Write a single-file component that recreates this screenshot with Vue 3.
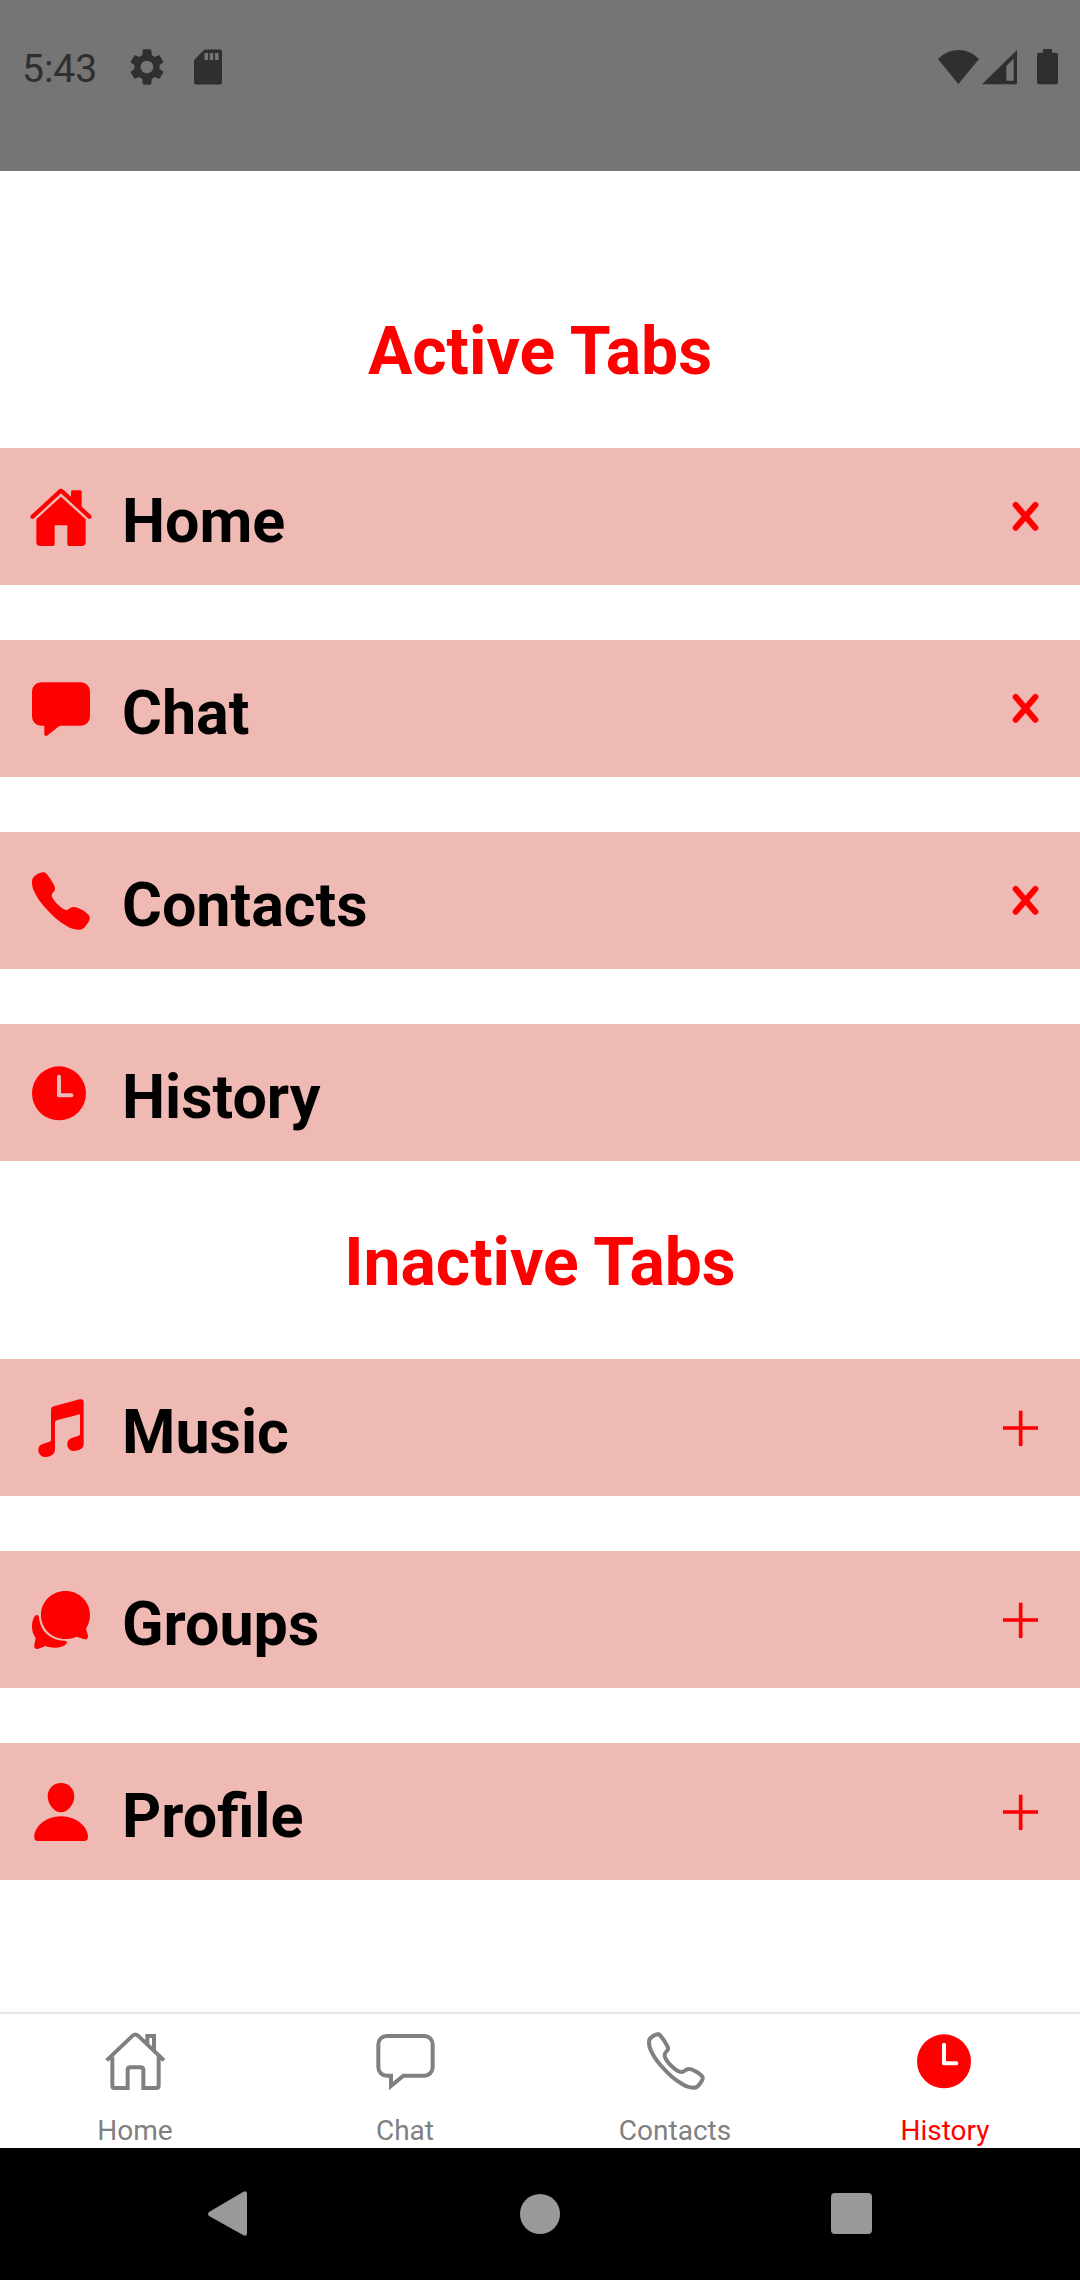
<script setup>
import { ref } from 'vue'

const phone =
  'M9 38C9 22 30 10 43 10C47 10 50 12 53 15C62 26 70 38 75 48C79 56 79 62 76 66C73 71 68 73 68 80C70 87 78 99 88 108C96 116 107 124 113 123C120 122 124 114 133 114C139 113 152 118 160 123C167 127 174 133 179 138C183 144 183 150 181 154C178 160 173 168 168 173C163 181 155 182 148 182C135 182 122 177 113 171C90 158 70 141 53 121C37 103 23 85 16 68C10 56 9 47 9 38Z'

const icons = {
  home: 'M6 91L88 15Q96 8 104 15L126 35V20Q126 16 130 16H154Q158 16 158 20V65L186 91Q190 96 186 100Q181 104 177 100L96 25L15 100Q11 104 6 100Q2 96 6 91ZM96 35L170 103V171Q170 183 158 183H120Q115 183 115 178V121H77V178Q77 183 72 183H34Q22 183 22 171V103Z',
  chat: 'M36 16H156A27 27 0 0 1 183 43V119A27 27 0 0 1 156 146H94Q91 147 88 149L56 175Q46 180 46 172V146H36A27 27 0 0 1 9 119V43A27 27 0 0 1 36 16Z',
  contacts: phone,
  history: 'M90 16A81 81 0 1 1 90 178A81 81 0 1 1 90 16ZM84 47V104Q84 109 90 109H127A6 6 0 0 0 127 97H96V47A6 6 0 0 0 84 47Z',
  music: 'M66 42C66 35 70 31 77 30L152 10C160 8 164 12 164 19V145C164 159 147 165 135 165C122 165 114 154 115 143C115 134 121 128 128 126L149 119Q153 118 153 114V55L83 73Q78 75 78 80V160C78 176 63 183 50 183C37 183 28 174 28 161C28 152 34 146 41 144L62 137Q66 135 66 131Z',
  groups: 'M110 9C151 9 183 41 183 81C183 98 178 111 171 122L177 143C178 151 172 156 166 154L143 146C133 151 122 153 110 153C68 153 36 122 36 81C36 41 68 9 110 9ZM24 81C28 81 29 84 30 89C33 112 42 129 58 142C72 153 88 159 108 158C114 159 115 164 112 168C104 176 90 179 78 179C67 179 58 177 50 174L26 183C19 184 14 179 16 172L20 150C13 140 9 129 9 116C9 102 14 81 24 81Z',
  profile: 'M96 9C120 9 136 28 136 49C136 73 117 97 96 97C75 97 56 73 56 49C56 28 72 9 96 9ZM96 109C146 109 177 144 177 170Q177 183 165 183H27Q15 183 16 170C16 144 46 109 96 109Z'
}

const current = ref('history')
const active = ref([
  { id: 'home', label: 'Home' },
  { id: 'chat', label: 'Chat' },
  { id: 'contacts', label: 'Contacts' },
  { id: 'history', label: 'History' }
])
const inactive = ref([
  { id: 'music', label: 'Music' },
  { id: 'groups', label: 'Groups' },
  { id: 'profile', label: 'Profile' }
])

function deactivate(tab) {
  active.value = active.value.filter((t) => t.id !== tab.id)
  inactive.value.push(tab)
}
function activate(tab) {
  inactive.value = inactive.value.filter((t) => t.id !== tab.id)
  active.value.push(tab)
}
</script>

<template>
  <div class="screen">
    <header class="status">
      <div class="status-group start">
        <time class="clock">5:43</time>
        <svg class="glyph" viewBox="0 0 24 24" aria-hidden="true">
          <path d="M19.14 12.94c.04-.3.06-.61.06-.94 0-.32-.02-.64-.07-.94l2.03-1.58c.18-.14.23-.41.12-.61l-1.92-3.32c-.12-.22-.37-.29-.59-.22l-2.39.96c-.5-.38-1.03-.7-1.62-.94L14.4 2.300c-.04-.24-.24-.41-.48-.41h-3.840c-.24 0-.43.17-.47.41l-.36 3.050c-.59.24-1.13.57-1.62.94l-2.390-.96c-.22-.08-.47 0-.59.22L2.740 8.870c-.12.21-.08.47.12.61l2.030 1.580c-.05.3-.09.63-.09.94s.02.64.07.94l-2.030 1.580c-.18.14-.23.41-.12.61l1.920 3.320c.12.22.37.29.59.22l2.390-.96c.5.38 1.030.7 1.620.94l.36 3.050c.05.24.24.41.48.41h3.840c.24 0 .44-.17.47-.41l.36-3.050c.59-.24 1.130-.56 1.620-.94l2.390.96c.22.08.47 0 .59-.22l1.920-3.320c.12-.22.07-.47-.12-.61l-2.010-1.580zM12 15.600c-1.980 0-3.600-1.620-3.600-3.600s1.620-3.600 3.600-3.600 3.600 1.620 3.600 3.600-1.620 3.600-3.600 3.600z" />
        </svg>
        <svg class="glyph" viewBox="0 0 24 24" aria-hidden="true">
          <path d="M18.500 2H10L4 8V20.500Q4 22 5.500 22H18.500Q20 22 20 20.500V3.500Q20 2 18.500 2ZM12 8H10V4H12ZM15 8H13V4H15ZM18 8H16V4H18Z" />
        </svg>
      </div>
      <div class="status-group end">
        <svg width="41" height="36" viewBox="0 0 123 108" aria-hidden="true">
          <path d="M0 30C36-6 87-6 123 30L61 105Z" />
        </svg>
        <svg class="signal" width="35" height="36" viewBox="0 0 105 108" aria-hidden="true">
          <path d="M105 3V106H0ZM95 29L73 51V95H95Z" />
        </svg>
        <svg width="21" height="36" viewBox="0 0 63 108" aria-hidden="true">
          <path d="M18 0H45V11H57Q63 11 63 17V100Q63 106 57 106H6Q0 106 0 100V17Q0 11 6 11H18Z" />
        </svg>
      </div>
    </header>

    <main class="sheet">
      <section>
        <h2>Active Tabs</h2>
        <ul class="list">
          <li v-for="tab in active" :key="tab.id" class="row">
            <svg class="icon" viewBox="0 0 189 189" aria-hidden="true">
              <path :d="icons[tab.id]" fill-rule="evenodd" />
            </svg>
            <span class="label">{{ tab.label }}</span>
            <button v-if="tab.id !== current" type="button" class="action" :aria-label="'Remove ' + tab.label" @click="deactivate(tab)">
              <svg viewBox="0 0 147 147"><path class="cross" d="M50 39L109 107M109 39L50 107" /></svg>
            </button>
          </li>
        </ul>
      </section>
      <section>
        <h2>Inactive Tabs</h2>
        <ul class="list">
          <li v-for="tab in inactive" :key="tab.id" class="row">
            <svg class="icon" viewBox="0 0 189 189" aria-hidden="true">
              <path :d="icons[tab.id]" fill-rule="evenodd" />
            </svg>
            <span class="label">{{ tab.label }}</span>
            <button type="button" class="action" :aria-label="'Add ' + tab.label" @click="activate(tab)">
              <svg viewBox="0 0 147 147"><path class="plus" d="M12 75H117M65 23V129" /></svg>
            </button>
          </li>
        </ul>
      </section>
    </main>

    <nav class="tabs">
      <a v-for="tab in active" :key="tab.id" href="#" class="tab" :class="{ selected: tab.id === current }" @click.prevent="current = tab.id">
        <svg v-if="tab.id === current" class="icon" viewBox="0 0 189 189" aria-hidden="true">
          <path :d="icons[tab.id]" fill-rule="evenodd" />
        </svg>
        <svg v-else-if="tab.id === 'home'" class="icon outline" viewBox="0 0 189 189" aria-hidden="true">
          <path d="M8 94L86 20Q94 13 102 20L180 94M25 83V170Q25 177 32 177H71V123Q71 115 79 115H110Q118 115 118 123V177H157Q164 177 164 170V83M130 46V21H150V66" />
        </svg>
        <svg v-else-if="tab.id === 'chat'" class="icon outline" viewBox="0 0 189 189" aria-hidden="true">
          <path d="M38 21H151A25 25 0 0 1 176 46V115A25 25 0 0 1 151 140H88L51 171V140H38A25 25 0 0 1 13 115V46A25 25 0 0 1 38 21Z" />
        </svg>
        <svg v-else-if="tab.id === 'contacts'" class="icon outline" viewBox="0 0 189 189" aria-hidden="true">
          <clipPath id="handset"><path :d="phone" /></clipPath>
          <path class="inner" clip-path="url(#handset)" :d="phone" />
        </svg>
        <svg v-else class="icon" viewBox="0 0 189 189" aria-hidden="true">
          <path :d="icons[tab.id]" fill-rule="evenodd" />
        </svg>
        <span class="tab-label">{{ tab.label }}</span>
      </a>
    </nav>

    <footer class="system">
      <button type="button" aria-label="Back">
        <svg viewBox="0 0 48 48"><path d="M39 2Q43 0 43 4V43Q43 47 39 45L5 26Q3 24 5 22Z" /></svg>
      </button>
      <button type="button" aria-label="Home screen">
        <svg viewBox="0 0 48 48"><circle cx="24" cy="24" r="20" /></svg>
      </button>
      <button type="button" aria-label="Overview">
        <svg viewBox="0 0 48 48"><rect x="3" y="3" width="41" height="41" rx="4" /></svg>
      </button>
    </footer>
  </div>
</template>

<style>
body {
  margin: 0;
}
</style>

<style scoped>
.screen {
  display: flex;
  flex-direction: column;
  min-height: 100vh;
  background: #fff;
  color: #000;
  font-family: Roboto, "Noto Sans", sans-serif;
}
svg {
  display: block;
  flex: none;
  fill: currentColor;
}
button {
  display: grid;
  place-items: center;
  padding: 0;
  border: 0;
  background: none;
  color: inherit;
}

.status {
  display: flex;
  justify-content: space-between;
  align-items: flex-start;
  box-sizing: border-box;
  min-height: 171px;
  padding: 46px 22px;
  background: #757575;
  color: #2f2f2f;
}
.status-group {
  display: flex;
  align-items: center;
  height: 42px;
}
.start {
  gap: 19px;
}
.clock {
  padding-top: 4px;
  margin-right: 10px;
  font-size: 39px;
  line-height: 42px;
}
.glyph {
  width: 42px;
  height: 42px;
}
.signal {
  margin: 0 20px 0 3px;
}

.sheet {
  flex: 1;
  padding: 79px 0 40px;
}
h2 {
  margin: 0;
  padding: 63px 0 57px;
  color: #f00;
  font-size: 66px;
  line-height: 78px;
  font-weight: 700;
  text-align: center;
}
.list {
  display: flex;
  flex-direction: column;
  gap: 55px;
  margin: 0;
  padding: 0;
  list-style: none;
}
.row {
  display: flex;
  align-items: center;
  min-height: 137px;
  padding: 0 32px 0 29px;
  background: #efb9b4;
}
.icon {
  width: 63px;
  height: 63px;
}
.row .icon,
.action {
  color: #f00;
}
.label {
  flex: 1;
  padding: 8px 0 0 30px;
  font-size: 61px;
  line-height: 72px;
  font-weight: 700;
}
.action svg {
  width: 49px;
  height: 49px;
}
.cross,
.plus {
  fill: none;
  stroke: currentColor;
}
.cross {
  stroke-width: 18px;
  stroke-linecap: round;
}
.plus {
  stroke-width: 11px;
}

.tabs {
  display: grid;
  grid-auto-flow: column;
  grid-auto-columns: 1fr;
  border-top: 2px solid #e6e6e6;
  box-shadow: 0 -1px 6px rgba(0, 0, 0, 0.04);
}
.tab {
  display: flex;
  flex-direction: column;
  align-items: center;
  gap: 22px;
  padding-top: 15px;
  color: #808080;
  text-decoration: none;
}
.selected {
  color: #f00;
}
.tab-label {
  font-size: 28px;
  line-height: 34px;
}
.outline path {
  fill: none;
  stroke: currentColor;
  stroke-width: 12px;
}
.outline .inner {
  stroke-width: 24px;
}

.system {
  display: grid;
  grid-template-columns: repeat(3, 1fr);
  align-items: center;
  min-height: 132px;
  padding: 0 72px;
  background: #000;
  color: #999;
}
.system svg {
  width: 48px;
  height: 48px;
}
</style>
